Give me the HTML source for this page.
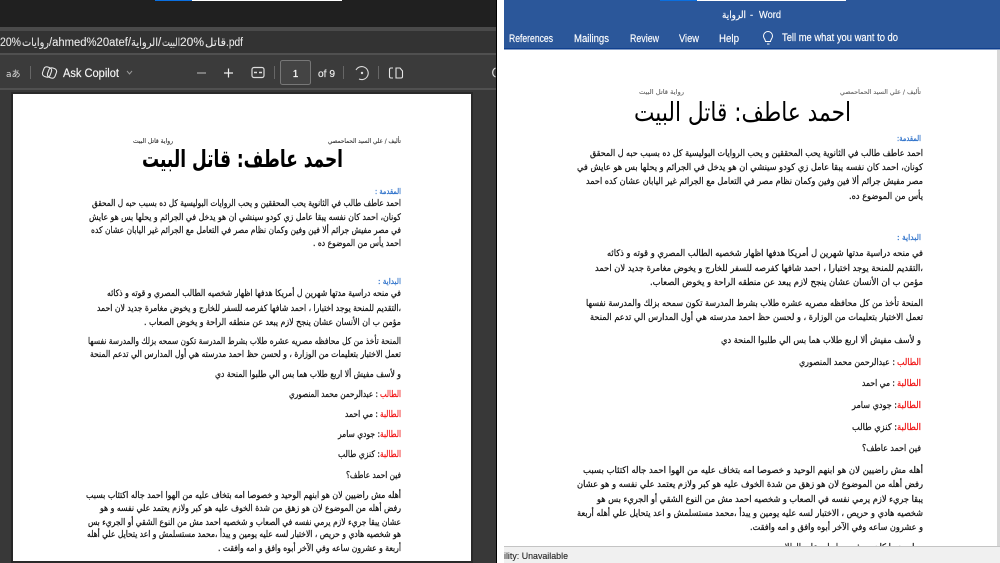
<!DOCTYPE html>
<html lang="ar"><head><meta charset="utf-8"><style>
html,body{margin:0;padding:0;width:1000px;height:563px;overflow:hidden;background:#fff}
svg{display:block;position:absolute;left:0;top:0}
.l{font-family:"DejaVu Sans",sans-serif;font-size:9px;fill:#111;stroke:#111;stroke-width:.22;direction:rtl}
.a{font-size:6.5px;fill:#333;stroke:#333;stroke-width:.12}
.b{fill:#2a6fc9;stroke:#2a6fc9;font-size:8px}
.r{fill:#f01010;stroke:#f01010}
.t{font-size:24px;fill:#000;stroke:none}
.u{font-family:"Liberation Sans","DejaVu Sans",sans-serif;font-size:11px;fill:#fff;stroke:#fff;stroke-width:.15}
.p{font-family:"Liberation Sans","DejaVu Sans",sans-serif;font-size:11.5px;fill:#e8e8e8;stroke:#e8e8e8;stroke-width:.1}
</style></head><body>
<svg width="1000" height="563" viewBox="0 0 1000 563" xmlns="http://www.w3.org/2000/svg">
<rect x="0" y="0" width="497" height="563" fill="#3a3a3a"/>
<rect x="0" y="0" width="496" height="27" fill="#202020"/>
<rect x="0" y="27" width="496" height="4" fill="#4a4a4a"/>
<rect x="0" y="31" width="496" height="22" fill="#333"/>
<rect x="0" y="53" width="496" height="2" fill="#505050"/>
<rect x="0" y="55" width="496" height="33" fill="#3b3b3b"/>
<rect x="0" y="88" width="496" height="2" fill="#505050"/>
<rect x="0" y="90" width="496" height="473" fill="#383838"/>
<rect x="496" y="0" width="1" height="563" fill="#000"/>
<rect x="155" y="0" width="37" height="1" fill="#0a6fe0"/><rect x="192" y="0" width="150" height="1" fill="#fff"/>
<text class="p" x="0" y="46" textLength="21" lengthAdjust="spacingAndGlyphs">20%</text>
<text class="p" x="49" y="46" direction="rtl" style="direction:rtl" textLength="27" lengthAdjust="spacingAndGlyphs">روايات</text>
<text class="p" x="49" y="46" textLength="82" lengthAdjust="spacingAndGlyphs">/ahmed%20atef/</text>
<text class="p" x="158" y="46" style="direction:rtl" textLength="27" lengthAdjust="spacingAndGlyphs">الرواية</text>
<text class="p" x="158" y="46">/</text>
<text class="p" x="180" y="46" style="direction:rtl" textLength="18" lengthAdjust="spacingAndGlyphs">البيت</text>
<text class="p" x="180" y="46" textLength="24" lengthAdjust="spacingAndGlyphs">20%</text>
<text class="p" x="226" y="46" style="direction:rtl" textLength="21" lengthAdjust="spacingAndGlyphs">قاتل</text>
<text class="p" x="226" y="46" textLength="17" lengthAdjust="spacingAndGlyphs">.pdf</text>
<text x="6" y="77" font-family="DejaVu Sans,Noto Sans CJK JP,sans-serif" font-size="9" fill="#ddd">aあ</text>
<rect x="30" y="66" width="1" height="13" fill="#666"/>
<g fill="none" stroke="#e6e6e6" stroke-width="1.1"><rect x="43" y="67" width="8" height="10" rx="3" transform="rotate(20 47 72)"/><rect x="48" y="68" width="8" height="10" rx="3" transform="rotate(20 52 73)"/></g>
<text x="63" y="77" font-family="Liberation Sans,sans-serif" font-size="11.5" fill="#f6f6f6" stroke="#f6f6f6" stroke-width=".15" textLength="56" lengthAdjust="spacingAndGlyphs">Ask Copilot</text>
<path d="M127 71l2.5 3 2.5-3" fill="none" stroke="#999" stroke-width="1"/>
<path d="M197 73h9" stroke="#aaa" stroke-width="1.2"/>
<path d="M224 73h9M228.500 68.500v9" stroke="#eee" stroke-width="1.2"/>
<rect x="252" y="67.500" width="12" height="10" rx="2" fill="none" stroke="#ddd" stroke-width="1.2"/><path d="M254 72.500h8" stroke="#ddd" stroke-width="1.5" stroke-dasharray="3 2"/>
<rect x="274" y="66" width="1" height="13" fill="#666"/>
<rect x="280.500" y="60.500" width="30" height="24" rx="2" fill="#444" stroke="#777"/>
<text x="295.500" y="77" text-anchor="middle" font-family="Liberation Sans,sans-serif" font-size="10" fill="#fff" stroke="#fff" stroke-width=".2">1</text>
<text x="318" y="77" font-family="Liberation Sans,sans-serif" font-size="10.500" fill="#eee" stroke="#eee" stroke-width=".15" textLength="17" lengthAdjust="spacingAndGlyphs">of 9</text>
<rect x="343" y="66" width="1" height="13" fill="#666"/>
<path d="M356 70a6.500 6.500 0 1 1 3 9" fill="none" stroke="#ddd" stroke-width="1.1"/><circle cx="362" cy="73" r="1.200" fill="#ddd"/>
<rect x="378" y="66" width="1" height="13" fill="#666"/>
<path d="M393 68h-2a1.500 1.500 0 0 0-1.500 1.500v7a1.500 1.500 0 0 0 1.500 1.500h2M396 68h4l2.500 3v5.500a1.500 1.500 0 0 1-1.500 1.500h-5z" fill="none" stroke="#e6e6e6" stroke-width="1.1"/>
<path d="M495.500 68a5 5 0 0 0 0 9" fill="none" stroke="#ddd" stroke-width="1.2"/>
<rect x="13" y="94" width="458" height="467" fill="#fff"/>
<rect x="11" y="92" width="2" height="471" fill="#262626"/><rect x="11" y="92" width="462" height="2" fill="#2a2a2a"/><rect x="471" y="92" width="2" height="471" fill="#2a2a2a"/><rect x="13" y="561" width="460" height="2" fill="#2a2a2a"/>

<g>
<text class="l a" x="401" y="143" textLength="73" lengthAdjust="spacingAndGlyphs">تأليف / علي السيد الحماحمصي</text>
<text class="l a" x="173" y="143" textLength="40" lengthAdjust="spacingAndGlyphs">رواية قاتل البيت</text>
<text class="l t" x="343" y="167" font-weight="bold" textLength="201" lengthAdjust="spacingAndGlyphs">احمد عاطف:  قاتل البيت</text>
<text class="l b" x="401" y="194" textLength="26" lengthAdjust="spacingAndGlyphs">المقدمة :</text>
<text class="l" x="401" y="206" textLength="309" lengthAdjust="spacingAndGlyphs">احمد عاطف طالب في الثانوية يحب المحققين و يحب الروايات البوليسية كل ده بسبب حبه ل المحقق</text>
<text class="l" x="401" y="220" textLength="312" lengthAdjust="spacingAndGlyphs">كونان، احمد كان نفسه يبقا عامل زي كودو سينشي  ان هو يدخل في الجرائم و يحلها   بس هو عايش</text>
<text class="l" x="401" y="233" textLength="310" lengthAdjust="spacingAndGlyphs">في مصر مفيش جرائم ألا فين وفين وكمان نظام مصر في التعامل مع الجرائم غير اليابان عشان كده</text>
<text class="l" x="401" y="246" textLength="88" lengthAdjust="spacingAndGlyphs">احمد يأس من الموضوع ده .</text>
<text class="l b" x="401" y="284" textLength="23" lengthAdjust="spacingAndGlyphs">البداية :</text>
<text class="l" x="401" y="296" textLength="294" lengthAdjust="spacingAndGlyphs">في منحه دراسية مدتها شهرين ل أمريكا هدفها اظهار شخصيه الطالب المصري و قوته و ذكائه</text>
<text class="l" x="401" y="311" textLength="304" lengthAdjust="spacingAndGlyphs">،التقديم للمنحة يوجد اختبارا ، احمد شافها كفرصه للسفر للخارج و يخوض مغامرة جديد لان احمد</text>
<text class="l" x="401" y="325" textLength="257" lengthAdjust="spacingAndGlyphs">مؤمن ب ان الأنسان عشان  ينجح لازم يبعد عن منطقه الراحة و يخوض الصعاب .</text>
<text class="l" x="401" y="344" textLength="313" lengthAdjust="spacingAndGlyphs">المنحة تأخذ من كل محافظه مصريه عشره طلاب بشرط المدرسة تكون سمحه بزلك  والمدرسة نفسها</text>
<text class="l" x="401" y="357" textLength="311" lengthAdjust="spacingAndGlyphs">تعمل الاختبار بتعليمات من الوزارة ، و لحسن حظ احمد مدرسته هي أول المدارس الي تدعم  المنحة</text>
<text class="l" x="401" y="377" textLength="186" lengthAdjust="spacingAndGlyphs">و لأسف مفيش ألا اربع طلاب هما بس الي طلبوا المنحة دي</text>
<text class="l r" x="401" y="397" textLength="21" lengthAdjust="spacingAndGlyphs">الطالب</text>
<text class="l" x="378" y="397" textLength="89" lengthAdjust="spacingAndGlyphs">: عبدالرحمن محمد المنصوري</text>
<text class="l r" x="401" y="417" textLength="21" lengthAdjust="spacingAndGlyphs">الطالبة</text>
<text class="l" x="378" y="417" textLength="33" lengthAdjust="spacingAndGlyphs">: مي احمد</text>
<text class="l r" x="401" y="437" textLength="21" lengthAdjust="spacingAndGlyphs">الطالبة</text>
<text class="l" x="380" y="437" textLength="42" lengthAdjust="spacingAndGlyphs">: جودي سامر</text>
<text class="l r" x="401" y="457" textLength="21" lengthAdjust="spacingAndGlyphs">الطالبة</text>
<text class="l" x="380" y="457" textLength="42" lengthAdjust="spacingAndGlyphs">: كنزي طالب</text>
<text class="l" x="401" y="478" textLength="55" lengthAdjust="spacingAndGlyphs">فين احمد عاطف؟</text>
<text class="l" x="401" y="498" textLength="315" lengthAdjust="spacingAndGlyphs">أهله مش راضيين لان هو ابنهم الوحيد  و خصوصا امه بتخاف عليه من الهوا احمد جاله اكتئاب بسبب</text>
<text class="l" x="401" y="511" textLength="301" lengthAdjust="spacingAndGlyphs">رفض أهله من الموضوع لان هو زهق من شدة الخوف عليه هو كبر ولازم يعتمد علي نفسه و هو</text>
<text class="l" x="401" y="525" textLength="313" lengthAdjust="spacingAndGlyphs">عشان يبقا جريء لازم يرمي نفسه في الصعاب و شخصيه احمد مش من النوع الشقي أو الجريء بس</text>
<text class="l" x="401" y="537" textLength="314" lengthAdjust="spacingAndGlyphs">هو شخصيه هادي و حريص ، الاختبار لسه عليه يومين و يبدأ ،محمد مستسلمش و اعد يتحايل علي أهله</text>
<text class="l" x="401" y="551" textLength="183" lengthAdjust="spacingAndGlyphs">أربعة و عشرون ساعه وفي الآخر أبوه وافق و امه وافقت .</text>
</g>

<rect x="504" y="0" width="496" height="49" fill="#2b579a"/>
<rect x="504" y="48" width="496" height="1.500" fill="#0f3f8f"/>
<rect x="660" y="0" width="37" height="1" fill="#0a6fe0"/><rect x="697" y="0" width="149" height="1" fill="#fff"/>
<text class="u" x="746" y="18" style="direction:rtl;font-family:'DejaVu Sans',sans-serif;font-size:10px" textLength="24" lengthAdjust="spacingAndGlyphs">الرواية</text>
<text class="u" x="750" y="18" style="font-size:9.500px">-</text>
<text class="u" x="759" y="18" style="font-size:10.500px" textLength="22" lengthAdjust="spacingAndGlyphs">Word</text>
<text class="u" x="509" y="42" textLength="44" lengthAdjust="spacingAndGlyphs">References</text>
<text class="u" x="574" y="42" textLength="35" lengthAdjust="spacingAndGlyphs">Mailings</text>
<text class="u" x="630" y="42" textLength="29" lengthAdjust="spacingAndGlyphs">Review</text>
<text class="u" x="679" y="42" textLength="20" lengthAdjust="spacingAndGlyphs">View</text>
<text class="u" x="719" y="42" textLength="20" lengthAdjust="spacingAndGlyphs">Help</text>
<path d="M767 44h2.500M765.500 41.500c0-2-2-3-2-5.500a4.500 4.500 0 0 1 9 0c0 2.500-2 3.500-2 5.500z" fill="none" stroke="#fff" stroke-width="1"/>
<text class="u" x="782" y="41" textLength="116" lengthAdjust="spacingAndGlyphs">Tell me what you want to do</text>
<rect x="997" y="50" width="3" height="496" fill="#d8d8d8"/>

<g>
<text class="l a" x="921" y="94" textLength="81" lengthAdjust="spacingAndGlyphs" style="fill:#666;stroke:#666">تأليف / علي السيد الحماحمصي</text>
<text class="l a" x="684" y="94" textLength="45" lengthAdjust="spacingAndGlyphs" style="fill:#666;stroke:#666">رواية قاتل البيت</text>
<text class="l t" x="851" y="121" textLength="217" lengthAdjust="spacingAndGlyphs" style="font-size:26px">احمد عاطف:  قاتل البيت</text>
<text class="l b" x="921" y="141" textLength="24" lengthAdjust="spacingAndGlyphs">المقدمة:</text>
<text class="l" x="923" y="156" textLength="333" lengthAdjust="spacingAndGlyphs">احمد عاطف طالب في الثانوية يحب المحققين و يحب الروايات البوليسية كل ده بسبب حبه ل المحقق</text>
<text class="l" x="923" y="170" textLength="346" lengthAdjust="spacingAndGlyphs">كونان، احمد كان نفسه يبقا عامل زي كودو سينشي  ان هو يدخل في الجرائم و يحلها   بس هو عايش في</text>
<text class="l" x="923" y="184" textLength="337" lengthAdjust="spacingAndGlyphs">مصر مفيش جرائم ألا فين وفين وكمان نظام مصر في التعامل مع الجرائم غير اليابان عشان كده احمد</text>
<text class="l" x="923" y="199" textLength="74" lengthAdjust="spacingAndGlyphs">يأس من الموضوع ده.</text>
<text class="l b" x="921" y="240" textLength="24" lengthAdjust="spacingAndGlyphs">البداية :</text>
<text class="l" x="923" y="256" textLength="316" lengthAdjust="spacingAndGlyphs">في منحه دراسية مدتها شهرين ل أمريكا هدفها اظهار شخصيه الطالب المصري و قوته و ذكائه</text>
<text class="l" x="923" y="271" textLength="328" lengthAdjust="spacingAndGlyphs">،التقديم للمنحة يوجد اختبارا ، احمد شافها كفرصه للسفر للخارج و يخوض مغامرة جديد لان احمد</text>
<text class="l" x="923" y="285" textLength="273" lengthAdjust="spacingAndGlyphs">مؤمن ب ان الأنسان عشان  ينجح لازم يبعد عن منطقه الراحة و يخوض الصعاب.</text>
<text class="l" x="923" y="306" textLength="337" lengthAdjust="spacingAndGlyphs">المنحة تأخذ من كل محافظه مصريه عشره طلاب بشرط المدرسة تكون سمحه بزلك  والمدرسة نفسها</text>
<text class="l" x="923" y="320" textLength="333" lengthAdjust="spacingAndGlyphs">تعمل الاختبار بتعليمات من الوزارة ، و لحسن حظ احمد مدرسته هي أول المدارس الي تدعم  المنحة</text>
<text class="l" x="921" y="343" textLength="200" lengthAdjust="spacingAndGlyphs">و لأسف مفيش ألا اربع طلاب هما بس الي طلبوا المنحة دي</text>
<text class="l r" x="921" y="365" textLength="24" lengthAdjust="spacingAndGlyphs">الطالب</text>
<text class="l" x="895" y="365" textLength="96" lengthAdjust="spacingAndGlyphs">: عبدالرحمن محمد المنصوري</text>
<text class="l r" x="921" y="386" textLength="24" lengthAdjust="spacingAndGlyphs">الطالبة</text>
<text class="l" x="895" y="386" textLength="33" lengthAdjust="spacingAndGlyphs">: مي احمد</text>
<text class="l r" x="921" y="408" textLength="24" lengthAdjust="spacingAndGlyphs">الطالبة</text>
<text class="l" x="897" y="408" textLength="45" lengthAdjust="spacingAndGlyphs">: جودي سامر</text>
<text class="l r" x="921" y="430" textLength="24" lengthAdjust="spacingAndGlyphs">الطالبة</text>
<text class="l" x="897" y="430" textLength="45" lengthAdjust="spacingAndGlyphs">: كنزي طالب</text>
<text class="l" x="921" y="451" textLength="59" lengthAdjust="spacingAndGlyphs">فين احمد عاطف؟</text>
<text class="l" x="923" y="473" textLength="340" lengthAdjust="spacingAndGlyphs">أهله مش راضيين لان هو ابنهم الوحيد  و خصوصا امه بتخاف عليه من الهوا احمد جاله اكتئاب بسبب</text>
<text class="l" x="923" y="487" textLength="346" lengthAdjust="spacingAndGlyphs">رفض أهله من الموضوع لان هو زهق من شدة الخوف عليه هو كبر ولازم يعتمد علي نفسه و هو عشان</text>
<text class="l" x="923" y="502" textLength="326" lengthAdjust="spacingAndGlyphs">يبقا جريء لازم يرمي نفسه في الصعاب و شخصيه احمد مش من النوع الشقي أو الجريء بس هو</text>
<text class="l" x="923" y="516" textLength="346" lengthAdjust="spacingAndGlyphs">شخصيه هادي و حريص ، الاختبار لسه عليه يومين و يبدأ ،محمد مستسلمش و اعد يتحايل علي أهله أربعة</text>
<text class="l" x="923" y="530" textLength="173" lengthAdjust="spacingAndGlyphs">و عشرون ساعه وفي الآخر أبوه وافق و امه وافقت.</text>
<text class="l" x="921" y="550" textLength="144" lengthAdjust="spacingAndGlyphs">و احمد ما كان يعرف يعمل ايه علي الطلاب</text>
</g>
<rect x="504" y="546" width="496" height="17" fill="#f0f0f0"/>
<rect x="504" y="546" width="496" height="1" fill="#c4c4c4"/>
<text x="504" y="559" font-family="Liberation Sans,sans-serif" font-size="9.5" fill="#222" stroke="#222" stroke-width=".1" textLength="64" lengthAdjust="spacingAndGlyphs">ility: Unavailable</text>
</svg>
</body></html>
